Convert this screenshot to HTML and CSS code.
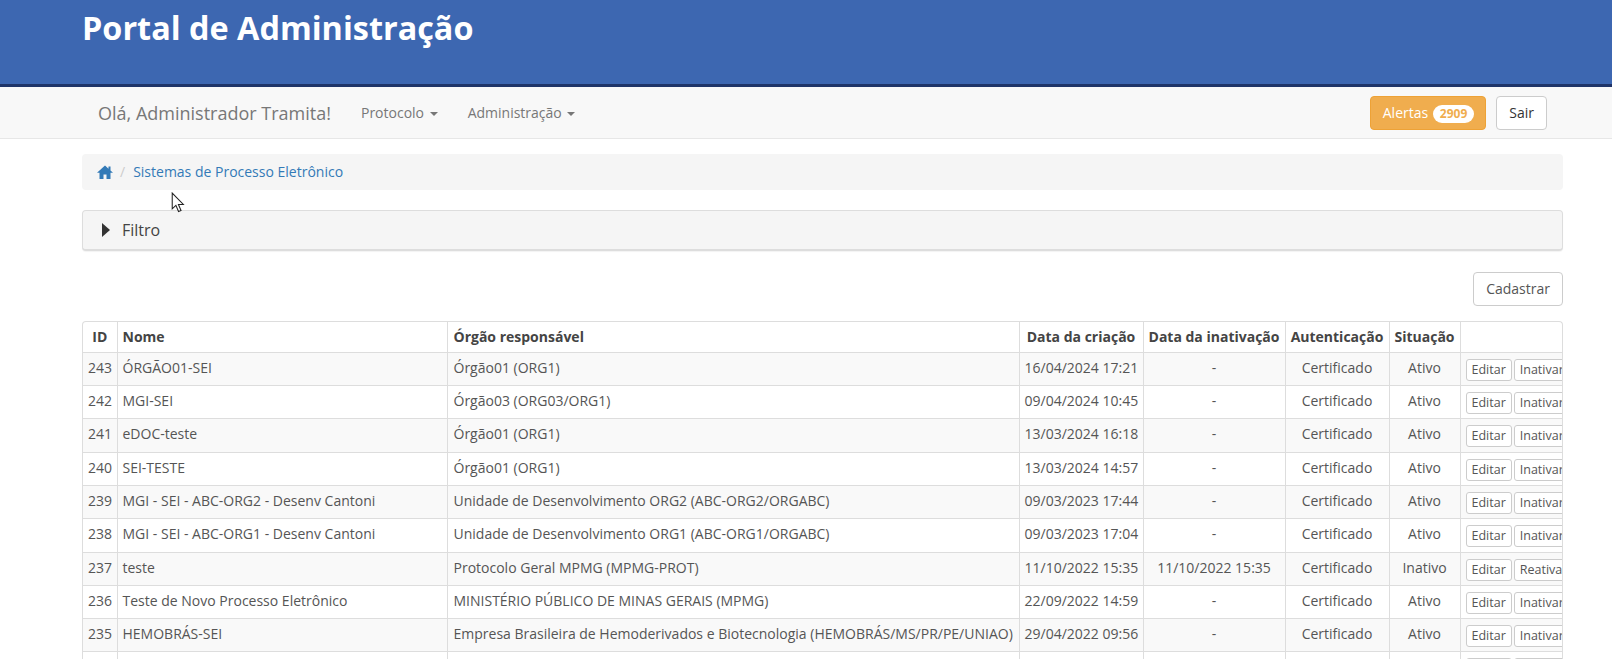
FILE: index.html
```html
<!doctype html>
<html>
<head>
  <title>Portal de Administração</title>
  <link rel="stylesheet" href="styles.css">
</head>
<body>
  <header class="banner">
    <h1>Portal de Administração</h1>
  </header>
  <nav class="navbar">
    <span class="brand">Olá, Administrador Tramita!</span>
    <a class="nav-link">Protocolo <i class="caret"></i></a>
    <a class="nav-link">Administração <i class="caret"></i></a>
    <div class="nav-right">
      <a class="btn btn-warning">Alertas <span class="badge">2909</span></a>
      <a class="btn">Sair</a>
    </div>
  </nav>
  <main>
    <div class="breadcrumb">
      <svg class="home" viewBox="0 0 16 14" width="16" height="14">
        <path d="M8 .5 L0 7.8 H2.5 V14 H6.5 V9.5 H9.5 V14 H13.5 V7.8 H16 L13.5 5.5 V1.5 H11.5 V3.7 Z"/>
      </svg>
      <span class="sep">/</span>
      <a>Sistemas de Processo Eletrônico</a>
    </div>
    <div class="panel">
      <i class="arrow"></i>
      <span>Filtro</span>
    </div>
    <div class="actions">
      <a class="btn">Cadastrar</a>
    </div>
    <div class="table-wrap">
      <table>
        <colgroup>
          <col class="c-id"><col class="c-nome"><col class="c-orgao"><col class="c-criacao">
          <col class="c-inativacao"><col class="c-aut"><col class="c-sit"><col class="c-acoes">
        </colgroup>
        <thead>
          <tr>
            <th>ID</th>
            <th class="left">Nome</th>
            <th class="left orgao">Órgão responsável</th>
            <th>Data da criação</th>
            <th>Data da inativação</th>
            <th>Autenticação</th>
            <th>Situação</th>
            <th></th>
          </tr>
        </thead>
        <tbody>
          <tr><td>243</td><td class="left">ÓRGÃO01-SEI</td><td class="left orgao">Órgão01 (ORG1)</td><td>16/04/2024 17:21</td><td>-</td><td>Certificado</td><td>Ativo</td><td class="btns"><a class="btn-xs">Editar</a><a class="btn-xs">Inativar</a></td></tr>
          <tr><td>242</td><td class="left">MGI-SEI</td><td class="left orgao">Órgão03 (ORG03/ORG1)</td><td>09/04/2024 10:45</td><td>-</td><td>Certificado</td><td>Ativo</td><td class="btns"><a class="btn-xs">Editar</a><a class="btn-xs">Inativar</a></td></tr>
          <tr class="tall"><td>241</td><td class="left">eDOC-teste</td><td class="left orgao">Órgão01 (ORG1)</td><td>13/03/2024 16:18</td><td>-</td><td>Certificado</td><td>Ativo</td><td class="btns"><a class="btn-xs">Editar</a><a class="btn-xs">Inativar</a></td></tr>
          <tr><td>240</td><td class="left">SEI-TESTE</td><td class="left orgao">Órgão01 (ORG1)</td><td>13/03/2024 14:57</td><td>-</td><td>Certificado</td><td>Ativo</td><td class="btns"><a class="btn-xs">Editar</a><a class="btn-xs">Inativar</a></td></tr>
          <tr><td>239</td><td class="left">MGI - SEI - ABC-ORG2 - Desenv Cantoni</td><td class="left orgao">Unidade de Desenvolvimento ORG2 (ABC-ORG2/ORGABC)</td><td>09/03/2023 17:44</td><td>-</td><td>Certificado</td><td>Ativo</td><td class="btns"><a class="btn-xs">Editar</a><a class="btn-xs">Inativar</a></td></tr>
          <tr class="tall"><td>238</td><td class="left">MGI - SEI - ABC-ORG1 - Desenv Cantoni</td><td class="left orgao">Unidade de Desenvolvimento ORG1 (ABC-ORG1/ORGABC)</td><td>09/03/2023 17:04</td><td>-</td><td>Certificado</td><td>Ativo</td><td class="btns"><a class="btn-xs">Editar</a><a class="btn-xs">Inativar</a></td></tr>
          <tr><td>237</td><td class="left">teste</td><td class="left orgao">Protocolo Geral MPMG (MPMG-PROT)</td><td>11/10/2022 15:35</td><td>11/10/2022 15:35</td><td>Certificado</td><td>Inativo</td><td class="btns"><a class="btn-xs">Editar</a><a class="btn-xs">Reativar</a></td></tr>
          <tr><td>236</td><td class="left">Teste de Novo Processo Eletrônico</td><td class="left orgao">MINISTÉRIO PÚBLICO DE MINAS GERAIS (MPMG)</td><td>22/09/2022 14:59</td><td>-</td><td>Certificado</td><td>Ativo</td><td class="btns"><a class="btn-xs">Editar</a><a class="btn-xs">Inativar</a></td></tr>
          <tr><td>235</td><td class="left">HEMOBRÁS-SEI</td><td class="left orgao">Empresa Brasileira de Hemoderivados e Biotecnologia (HEMOBRÁS/MS/PR/PE/UNIAO)</td><td>29/04/2022 09:56</td><td>-</td><td>Certificado</td><td>Ativo</td><td class="btns"><a class="btn-xs">Editar</a><a class="btn-xs">Inativar</a></td></tr>
          <tr><td></td><td></td><td></td><td></td><td></td><td></td><td></td><td class="btns"><a class="btn-xs">Editar</a><a class="btn-xs">Inativar</a></td></tr>
        </tbody>
      </table>
    </div>
  </main>
  <svg class="cursor" viewBox="0 0 13 20" width="14" height="21">
    <path d="M1 1 V16 L4.5 12.7 L7 18.6 L9.4 17.6 L6.9 11.9 H11.6 Z" fill="#fff" stroke="#222" stroke-width="1"/>
  </svg>
</body>
</html>
```

FILE: styles.css
```css
html, body {
  height: 100%;
  overflow: hidden;
}
body {
  margin: 0;
  position: relative;
  font-family: "Open Sans", "Liberation Sans", sans-serif;
  font-size: 14px;
  line-height: 20px;
  color: #555;
  background: #fff;
}

.banner {
  background-color: #3d67b1;
  border-bottom: 3px solid #1f3468;
  height: 84px;
  padding-left: 82px;
}
h1 {
  margin: 0;
  padding-top: 7px;
  color: #fff;
  font-size: 32.4px;
  font-weight: 700;
  line-height: 40px;
}

.navbar {
  display: flex;
  align-items: center;
  height: 52px;
  box-sizing: border-box;
  padding: 0 65px 0 98px;
  background-color: #f8f8f8;
  border-bottom: 1px solid #e7e7e7;
}
.brand {
  color: #777;
  font-size: 18px;
  margin-right: 30px;
}
.nav-link {
  color: #777;
  margin-right: 30px;
}
.caret {
  display: inline-block;
  width: 0;
  height: 0;
  margin-left: 2px;
  vertical-align: middle;
  border-top: 4px solid #777;
  border-left: 4px solid transparent;
  border-right: 4px solid transparent;
}
.nav-right {
  display: flex;
  gap: 10px;
  margin-left: auto;
}

.btn {
  display: inline-block;
  box-sizing: border-box;
  height: 34px;
  padding: 6px 12px;
  border: 1px solid #ccc;
  border-radius: 4px;
  background: #fff;
  color: #333;
}
.btn-warning {
  padding-right: 11px;
  background-color: #f0ad4e;
  border-color: #eea236;
  color: #fff;
}
.badge {
  display: inline-block;
  min-width: 10px;
  padding: 3px 7px;
  margin-left: 1px;
  border-radius: 10px;
  background: #fff;
  color: #f0ad4e;
  font-size: 12px;
  font-weight: 700;
  line-height: 12px;
  vertical-align: middle;
}

main {
  padding: 15px 49px 0 82px;
}
.breadcrumb {
  display: flex;
  align-items: center;
  height: 36px;
  padding: 0 15px;
  box-sizing: border-box;
  background-color: #f5f5f5;
  border-radius: 4px;
  margin-bottom: 20px;
}
.breadcrumb a {
  color: #337ab7;
}
.home {
  fill: #337ab7;
}
.sep {
  color: #ccc;
  margin: 0 8px 0 7px;
}

.panel {
  display: flex;
  align-items: center;
  height: 41px;
  box-sizing: border-box;
  padding: 0 19px;
  background-color: #f5f5f5;
  border: 1px solid #ddd;
  border-bottom-width: 2px;
  border-radius: 4px;
  box-shadow: 0 1px 1px rgba(0, 0, 0, .05);
  font-size: 16px;
  color: #444;
}
.arrow {
  width: 0;
  height: 0;
  margin-right: 12px;
  border-left: 8px solid #333;
  border-top: 7px solid transparent;
  border-bottom: 7px solid transparent;
}

.actions {
  display: flex;
  justify-content: flex-end;
  margin: 21px 0 15px;
}
.actions .btn {
  color: #555;
}

.table-wrap {
  overflow: hidden;
  border: 1px solid #ddd;
  border-bottom: 0;
  border-radius: 4px 4px 0 0;
}
table {
  table-layout: fixed;
  width: 1508px;
  border-collapse: collapse;
}
.c-id { width: 34px; }
.c-nome { width: 330px; }
.c-orgao { width: 572px; }
.c-criacao { width: 124px; }
.c-inativacao { width: 142px; }
.c-aut { width: 104px; }
.c-sit { width: 71px; }
.c-acoes { width: 131px; }

th, td {
  box-sizing: border-box;
  padding: 5px;
  border: 1px solid #ddd;
  text-align: center;
  vertical-align: top;
  white-space: nowrap;
}
tr > :first-child { border-left: 0; }
thead tr > * { border-top: 0; }
th {
  height: 30px;
  color: #444;
  font-weight: 700;
}
td {
  height: 33px;
}
.tall td {
  height: 34px;
}
tbody tr:nth-child(odd) {
  background-color: #f9f9f9;
}
.left {
  text-align: left;
}
.orgao {
  padding-left: 6px;
}
.btns {
  text-align: left;
  padding: 6px 5px 4px;
}
.btn-xs {
  display: inline-block;
  box-sizing: border-box;
  height: 22px;
  padding: 0 5px;
  margin-right: 2px;
  border: 1px solid #ccc;
  border-radius: 3px;
  background: #fff;
  font-size: 12.5px;
  line-height: 20px;
  color: #555;
  vertical-align: top;
}

.cursor {
  position: absolute;
  left: 171px;
  top: 192px;
}
```
